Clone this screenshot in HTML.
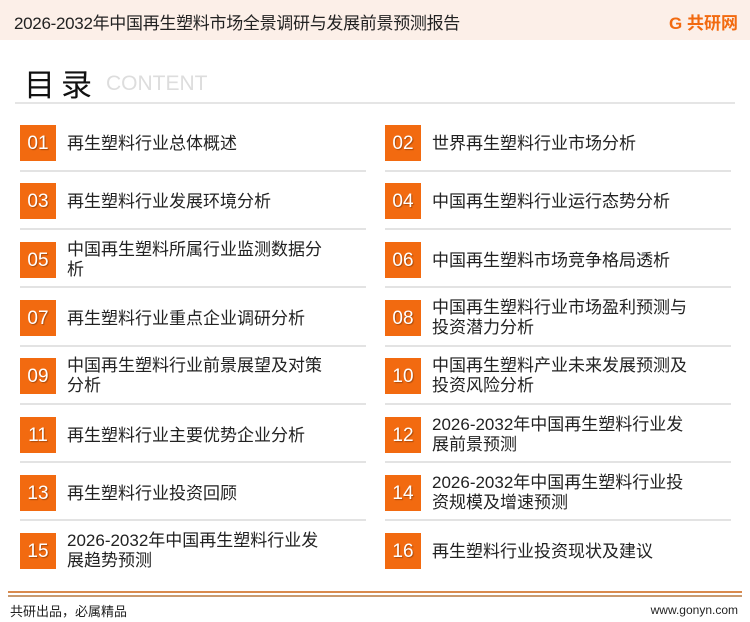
<!DOCTYPE html>
<html><head><meta charset="utf-8"><style>
*{margin:0;padding:0;box-sizing:border-box}
body{width:750px;height:622px;background:#fff;position:relative;overflow:hidden;font-family:"Liberation Sans","Noto Sans CJK SC",sans-serif;color:#222}
.hdr{position:absolute;left:0;top:0;width:750px;height:40px;background:#fcefe8}
.hdr .t{position:absolute;left:14px;top:9px;font-size:17px;color:#222;letter-spacing:-0.3px}
.logo{position:absolute;right:12px;top:9px;font-size:17px;font-weight:bold;color:#f26a10}
.ttl{position:absolute;left:24px;top:60px;font-size:31px;color:#111;letter-spacing:6px}
.ct{position:absolute;left:106px;top:72px;font-size:21px;color:#ddd}
.hl{position:absolute;left:15px;top:102px;width:720px;height:2px;background:#e5e5e5}
.n{position:absolute;width:36px;height:36px;background:#f26a10;color:#fff;font-size:19px;text-align:center;line-height:38px;text-shadow:1px 1px 1px rgba(0,0,0,.3)}
.x{position:absolute;font-size:17px;line-height:20px;color:#222;width:262px}
.s{position:absolute;height:2px;background:#e3e3e3;width:346px}
.b1{position:absolute;left:8px;top:591px;width:734px;height:2px;background:#d98a4e}
.b2{position:absolute;left:8px;top:595px;width:734px;height:2px;background:#c89a70}
.f1{position:absolute;left:10px;top:601px;font-size:13px}
.f2{position:absolute;right:12px;top:603px;font-size:12px}
</style></head><body>
<div class="hdr"><div class="t">2026-2032年中国再生塑料市场全景调研与发展前景预测报告</div><div class="logo">G 共研网</div></div>
<div class="ttl">目录</div><div class="ct">CONTENT</div><div class="hl"></div>

<div class="n" style="left:20px;top:125px">01</div><div class="x" style="left:67px;top:134px">再生塑料行业总体概述</div><div class="s" style="left:20px;top:170px"></div>
<div class="n" style="left:385px;top:125px">02</div><div class="x" style="left:432px;top:134px">世界再生塑料行业市场分析</div><div class="s" style="left:385px;top:170px"></div>

<div class="n" style="left:20px;top:183px">03</div><div class="x" style="left:67px;top:192px">再生塑料行业发展环境分析</div><div class="s" style="left:20px;top:228px"></div>
<div class="n" style="left:385px;top:183px">04</div><div class="x" style="left:432px;top:192px">中国再生塑料行业运行态势分析</div><div class="s" style="left:385px;top:228px"></div>

<div class="n" style="left:20px;top:242px">05</div><div class="x" style="left:67px;top:240px">中国再生塑料所属行业监测数据分析</div><div class="s" style="left:20px;top:286px"></div>
<div class="n" style="left:385px;top:242px">06</div><div class="x" style="left:432px;top:251px">中国再生塑料市场竞争格局透析</div><div class="s" style="left:385px;top:286px"></div>

<div class="n" style="left:20px;top:300px">07</div><div class="x" style="left:67px;top:309px">再生塑料行业重点企业调研分析</div><div class="s" style="left:20px;top:345px"></div>
<div class="n" style="left:385px;top:300px">08</div><div class="x" style="left:432px;top:298px">中国再生塑料行业市场盈利预测与投资潜力分析</div><div class="s" style="left:385px;top:345px"></div>

<div class="n" style="left:20px;top:358px">09</div><div class="x" style="left:67px;top:356px">中国再生塑料行业前景展望及对策分析</div><div class="s" style="left:20px;top:403px"></div>
<div class="n" style="left:385px;top:358px">10</div><div class="x" style="left:432px;top:356px">中国再生塑料产业未来发展预测及投资风险分析</div><div class="s" style="left:385px;top:403px"></div>

<div class="n" style="left:20px;top:417px">11</div><div class="x" style="left:67px;top:426px">再生塑料行业主要优势企业分析</div><div class="s" style="left:20px;top:461px"></div>
<div class="n" style="left:385px;top:417px">12</div><div class="x" style="left:432px;top:415px">2026-2032年中国再生塑料行业发展前景预测</div><div class="s" style="left:385px;top:461px"></div>

<div class="n" style="left:20px;top:475px">13</div><div class="x" style="left:67px;top:484px">再生塑料行业投资回顾</div><div class="s" style="left:20px;top:519px"></div>
<div class="n" style="left:385px;top:475px">14</div><div class="x" style="left:432px;top:473px">2026-2032年中国再生塑料行业投资规模及增速预测</div><div class="s" style="left:385px;top:519px"></div>

<div class="n" style="left:20px;top:533px">15</div><div class="x" style="left:67px;top:531px">2026-2032年中国再生塑料行业发展趋势预测</div>
<div class="n" style="left:385px;top:533px">16</div><div class="x" style="left:432px;top:542px">再生塑料行业投资现状及建议</div>

<div class="b1"></div><div class="b2"></div>
<div class="f1">共研出品，必属精品</div><div class="f2">www.gonyn.com</div>
</body></html>
